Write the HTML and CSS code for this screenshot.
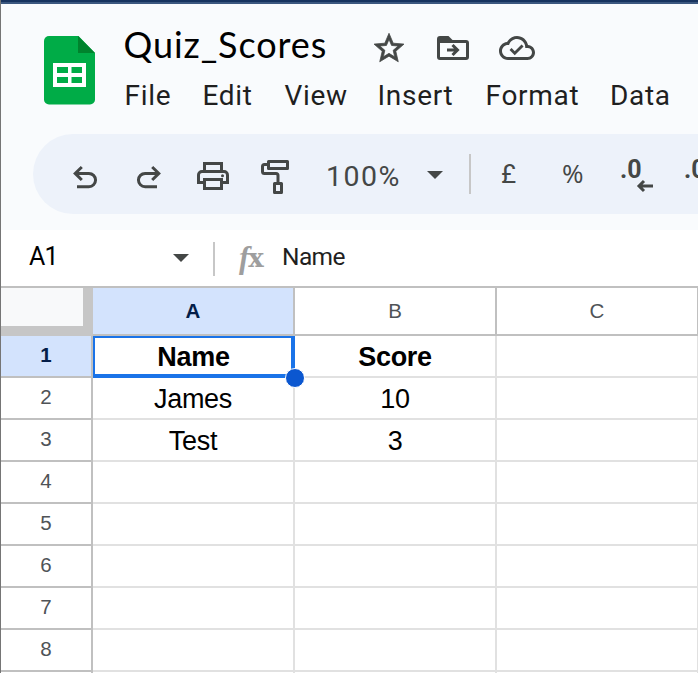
FILE: index.html
```html
<!DOCTYPE html>
<html lang="en">
<head>
<meta charset="utf-8">
<title>Quiz_Scores</title>
<link rel="stylesheet" href="styles.css">
</head>
<body>
<div class="app">
  <header class="header">
    <svg class="logo" width="52" height="70" viewBox="0 0 52 70">
      <path fill="#00ac47" d="M5 1H34.500L51 18V64.500a5 5 0 0 1-5 5H5a5 5 0 0 1-5-5V6a5 5 0 0 1 5-5z"/>
      <path fill="#00832d" d="M34 1L51 18H34z"/>
      <path fill="#fff" fill-rule="evenodd" d="M9 28H42V52H9zM13 32V38H24V32zM27.500 32V38H38V32zM13 42V48H24V42zM27.500 42V48H38V42z"/>
    </svg>
    <div class="heading">
      <div class="title-row">
        <h1 class="title">Quiz_Scores</h1>
        <svg class="star" width="30" height="29" viewBox="2 2 20 19" fill="#444746" stroke="#444746" stroke-width="0.5"><path d="M22 9.240l-7.190-.62L12 2 9.190 8.630 2 9.240l5.460 4.730L5.820 21 12 17.270 18.180 21l-1.630-7.030L22 9.240zM12 15.400l-3.760 2.270 1-4.280-3.320-2.880 4.380-.38L12 6.100l1.710 4.040 4.380.38-3.320 2.880 1 4.280L12 15.400z"/></svg>
        <svg class="folder" width="32" height="24" viewBox="0 0 32 24">
          <path fill="#444746" d="M0 3a3 3 0 0 1 3-3h8.500l4 4H29a3 3 0 0 1 3 3v14a3 3 0 0 1-3 3H3a3 3 0 0 1-3-3zM3 7v14h26V7z" fill-rule="evenodd"/>
          <path d="M10 14H20M15.500 9L20.500 14L15.500 19" fill="none" stroke="#444746" stroke-width="3"/>
        </svg>
        <svg class="cloud" width="36" height="24" viewBox="0 4 24 16" fill="#444746"><path d="M19.350 10.040C18.670 6.590 15.640 4 12 4 9.110 4 6.600 5.640 5.350 8.040 2.340 8.360 0 10.910 0 14c0 3.310 2.690 6 6 6h13c2.760 0 5-2.240 5-5 0-2.640-2.050-4.780-4.650-4.960zM19 18H6c-2.210 0-4-1.790-4-4s1.790-4 4-4h.71C7.370 7.690 9.480 6 12 6c3.040 0 5.500 2.460 5.500 5.500v.5H19c1.660 0 3 1.340 3 3s-1.340 3-3 3z"/><path d="M7.700 12.700L10.500 15.500L15.700 10.300" fill="none" stroke="#444746" stroke-width="1.900"/></svg>
      </div>
      <nav class="menu"><span>File</span><span>Edit</span><span>View</span><span>Insert</span><span>Format</span><span>Data</span></nav>
    </div>
  </header>

  <div class="toolbar">
    <svg class="undo" width="24" height="24" viewBox="0 0 24 24"><path class="line" d="M2 8.400H15.900a6.650 6.650 0 0 1 0 13.300H4M8.800 2L2.200 8.400L8.800 15"/></svg>
    <svg class="redo" width="24" height="24" viewBox="0 0 24 24"><path class="line" d="M22 8.400H8.100a6.650 6.650 0 0 0 0 13.300H20M15.200 2L21.800 8.400L15.200 15"/></svg>
    <svg class="print" width="32" height="28" viewBox="0 0 32 28">
      <path class="line" d="M7.500 9V1.500H24.500V9M6 20.500H1.500V13a3.500 3.500 0 0 1 3.500-3.500H27a3.500 3.500 0 0 1 3.500 3.500V20.500H26M7.500 17.500H24.500V26.500H7.500z"/>
      <circle cx="25.500" cy="13.700" r="1.500" fill="#444746"/>
    </svg>
    <svg class="paint" width="28" height="34" viewBox="0 0 28 34"><path class="line" d="M7.500 1.500H26.500V8.500H7.500zM6 4.500H3.500a2 2 0 0 0-2 2V11.500a2 2 0 0 0 2 2H15a2 2 0 0 1 2 2V22M13.500 23.500H20.500V32.500H13.500z" stroke-linejoin="round"/></svg>
    <span class="zoom">100%</span>
    <i class="caret"></i>
    <i class="divider"></i>
    <span class="pound">£</span>
    <span class="percent">%</span>
    <span class="decimal">.0<svg class="decimal-arrow" width="16" height="12" viewBox="0 0 16 12"><path class="line" d="M2 6H16M7 1L2 6L7 11"/></svg></span>
    <span class="decimal">.0</span>
  </div>

  <div class="formula-bar">
    <span class="cell-name">A1</span>
    <i class="caret"></i>
    <i class="divider"></i>
    <span class="fx"><i>f</i><b>x</b></span>
    <span class="formula">Name</span>
  </div>

  <main class="sheet">
    <div class="corner"></div><div class="col active">A</div><div class="col">B</div><div class="col">C</div>
    <div class="row active">1</div><div class="cell head selected">Name</div><div class="cell head">Score</div><div class="cell"></div>
    <div class="row">2</div><div class="cell">James</div><div class="cell">10</div><div class="cell"></div>
    <div class="row">3</div><div class="cell">Test</div><div class="cell">3</div><div class="cell"></div>
    <div class="row">4</div><div class="cell"></div><div class="cell"></div><div class="cell"></div>
    <div class="row">5</div><div class="cell"></div><div class="cell"></div><div class="cell"></div>
    <div class="row">6</div><div class="cell"></div><div class="cell"></div><div class="cell"></div>
    <div class="row">7</div><div class="cell"></div><div class="cell"></div><div class="cell"></div>
    <div class="row">8</div><div class="cell"></div><div class="cell"></div><div class="cell"></div>
    <div class="row"></div><div class="cell"></div><div class="cell"></div><div class="cell"></div>
  </main>
</div>
</body>
</html>
```
FILE: styles.css
```css
* { box-sizing: border-box; }
body { margin: 0; background: #fff; overflow: hidden; }
svg { display: block; flex: none; overflow: visible; }
.app {
  width: 698px;
  height: 673px;
  overflow: hidden;
  border-left: 1px solid #757575;
  font-family: Roboto, "Liberation Sans", sans-serif;
  color: #1f1f1f;
  background: #f9fbfd;
}
.header {
  display: flex;
  height: 134px;
  border-top: 2px solid #17335f;
  box-shadow: inset 0 2px #3b577f;
}
.logo { margin: 33px 0 0 42.5px; }
.heading { margin-left: 28px; flex: 1; }
.title-row { display: flex; align-items: flex-start; height: 75px; }
.title {
  margin: 18px 0 0;
  width: 250.5px;
  font: 400 36px/48px Lato, sans-serif;
  letter-spacing: 0.9px;
  color: #000;
}
.star { margin-top: 31px; }
.folder { margin: 34px 0 0 33px; }
.cloud { margin: 34px 0 0 30px; }
.menu {
  display: grid;
  grid-template-columns: 78px 82px 93px 108px 124.5px 1fr;
  padding-left: 1px;
  font-size: 28px;
  line-height: 38px;
  letter-spacing: 0.7px;
}
.toolbar {
  display: flex;
  height: 80px;
  margin-left: 32px;
  padding-left: 40px;
  overflow: hidden;
  background: #edf2fa;
  border-radius: 40px 0 0 40px;
  color: #444746;
}
.toolbar > span { flex: none; }
.line { fill: none; stroke: #444746; stroke-width: 3; }
.undo { margin-top: 31px; }
.redo { margin: 31px 0 0 40px; }
.print { margin: 28px 0 0 36px; }
.paint { margin: 26px 0 0 32px; }
.zoom { width: 101px; margin-left: 37px; font-size: 28.5px; line-height: 85px; letter-spacing: 1.5px; }
.caret {
  flex: none;
  width: 16px;
  height: 8px;
  background: #444746;
  clip-path: polygon(0 0, 100% 0, 50% 100%);
}
.toolbar .caret { margin-top: 37px; }
.divider { flex: none; width: 2px; background: #c7c7c7; }
.toolbar .divider { height: 40px; margin: 20px 0 0 26px; }
.pound { width: 60px; margin-left: 30px; font-size: 26px; line-height: 80px; }
.percent { width: 59px; padding-left: 1px; font: 26px/79px "Open Sans", sans-serif; }
.decimal { position: relative; width: 64px; font-size: 25px; font-weight: 700; line-height: 72px; }
.decimal-arrow { position: absolute; left: 17px; top: 46px; }
.formula-bar {
  display: flex;
  height: 58px;
  margin-top: 16px;
  border-bottom: 2px solid #c0c0c0;
  background: #fff;
  font-size: 25px;
  line-height: 54px;
}
.cell-name { width: 144px; margin-left: 28px; color: #000; letter-spacing: -0.7px; }
.formula-bar .caret { margin-top: 24px; }
.formula-bar .divider { height: 34px; margin: 12px 0 0 24px; }
.fx { display: flex; width: 43px; margin-left: 24px; color: #9e9e9e; }
.fx i { font: italic 700 31px/56px "Liberation Serif", serif; }
.fx b { margin-left: -1px; font: 700 26px/57px "DejaVu Serif", serif; }
.formula { font-size: 24.5px; letter-spacing: -0.6px; }
.sheet {
  display: grid;
  grid-template-columns: 92px 202px 202px 202px;
  grid-template-rows: 48px;
  grid-auto-rows: 42px;
  text-align: center;
  background: #fff;
  font-family: "Liberation Sans", Arial, sans-serif;
}
.corner {
  background: #f8f9fa;
  border: solid #c6c6c6;
  border-width: 0 10px 10px 0;
}
.col, .row {
  border: solid #c0c0c0;
  border-width: 0 2px 2px 0;
  font-size: 20.5px;
  color: #4f5357;
}
.col { line-height: 46px; }
.row { line-height: 37px; }
.active { background: #d3e3fd; color: #041e49; font-weight: 700; }
.cell {
  position: relative;
  border: solid #e1e1e1;
  border-width: 0 2px 2px 0;
  font-size: 27px;
  letter-spacing: -0.3px;
  line-height: 42px;
  color: #000;
}
.head { font-weight: 700; }
.selected {
  z-index: 1;
  border: solid #1a73e8;
  border-width: 2px 4px 4px 2px;
  padding-left: 1px;
  line-height: 38px;
}
.selected::after {
  content: "";
  position: absolute;
  right: -14px;
  bottom: -14px;
  width: 18px;
  height: 18px;
  border: 1px solid #fff;
  border-radius: 50%;
  background: #0b57d0;
}
```
